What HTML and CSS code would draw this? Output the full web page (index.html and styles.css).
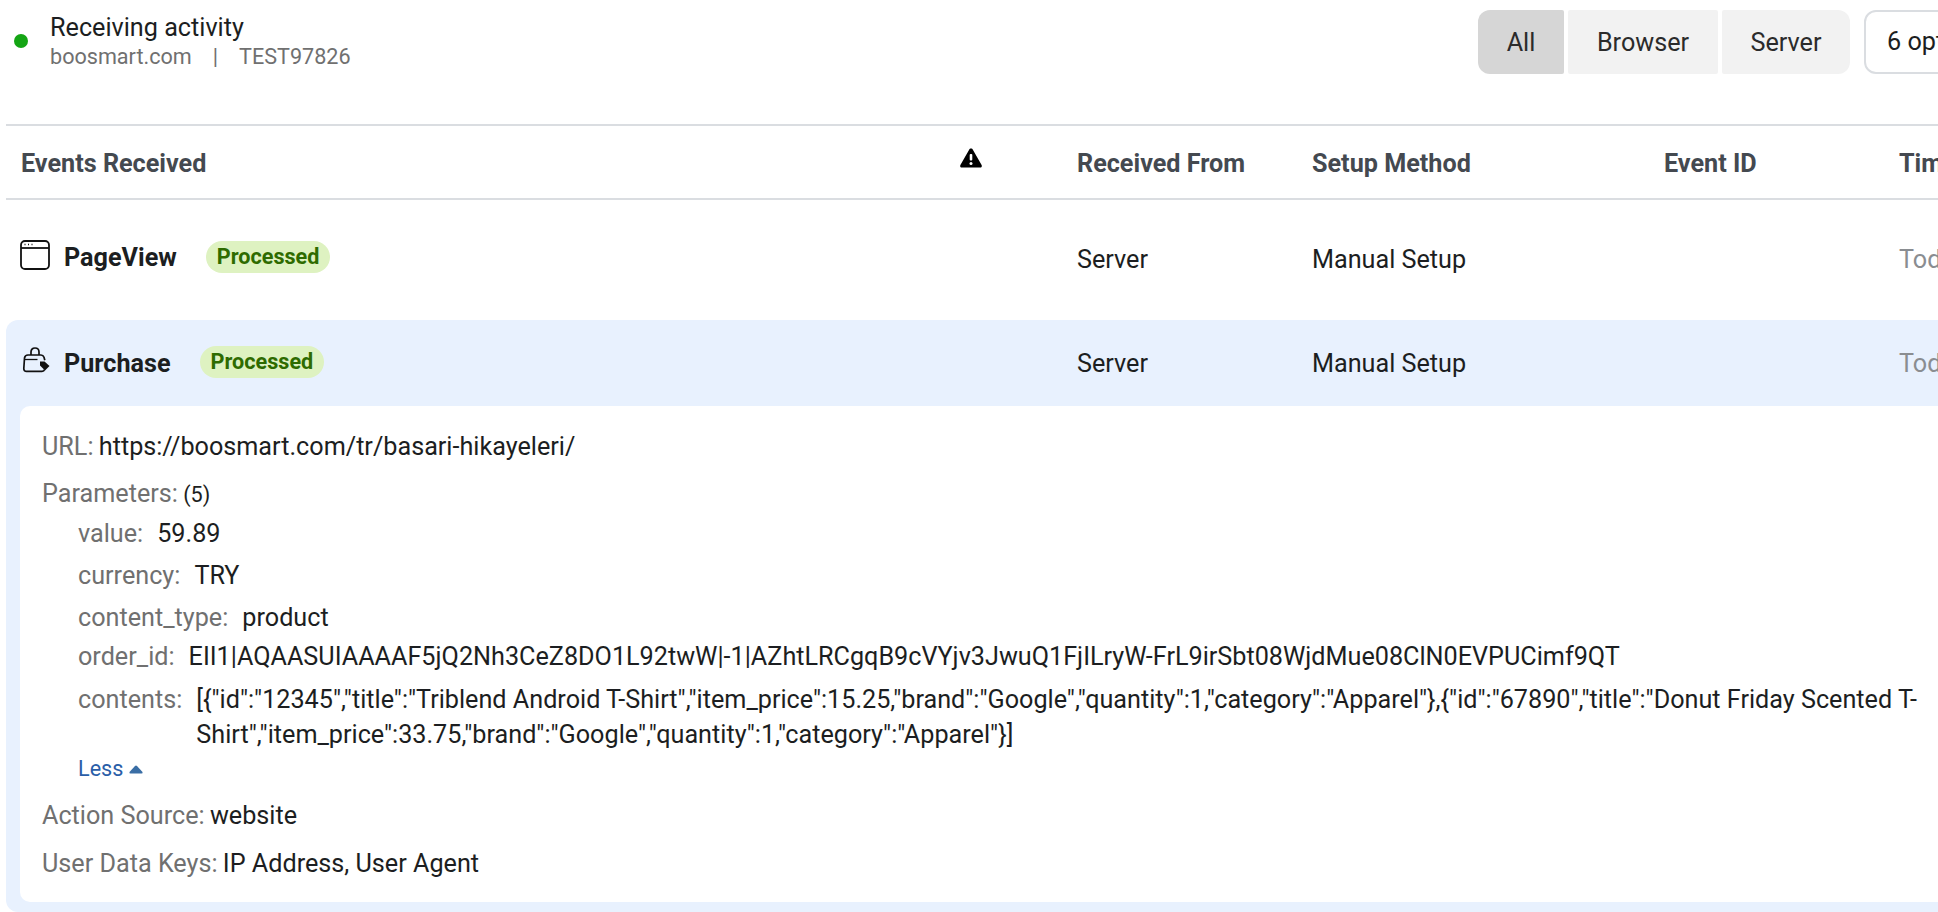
FILE: index.html
```html
<!DOCTYPE html>
<html>
<head>
	<meta charset="utf-8">
	<title>Test Events</title>
	<link rel="stylesheet" href="styles.css">
</head>
<body>
	<div class="page">
		<div class="topbar">
			<div class="status">
				<span class="dot"></span>
				<div>
					<div class="status-title">Receiving activity</div>
					<div class="status-sub"><span>boosmart.com</span><span class="sep">|</span><span>TEST97826</span></div>
				</div>
			</div>
			<div class="filters">
				<div class="seg seg-first seg-on">All</div>
				<div class="seg seg-browser">Browser</div>
				<div class="seg seg-last">Server</div>
				<div class="select">6 options selected</div>
			</div>
		</div>

		<div class="cols head">
			<div class="c-name">Events Received</div>
			<div class="c-warn">
				<svg width="24" height="20" viewBox="0 0 24 20"><path d="M12 0.500c.9 0 1.500.5 2 1.400l8.600 15c.7 1.300 0 2.600-1.500 2.600H2.900c-1.500 0-2.200-1.300-1.500-2.600l8.600-15c.5-.9 1.100-1.400 2-1.400z" fill="#000"/><rect x="10.700" y="6" width="2.600" height="6.600" rx="1" fill="#fff"/><circle cx="12" cy="15.400" r="1.500" fill="#fff"/></svg>
			</div>
			<div class="c-from">Received From</div>
			<div class="c-method">Setup Method</div>
			<div class="c-id">Event ID</div>
			<div class="c-time">Time Received</div>
		</div>

		<div class="cols row">
			<div class="c-name">
				<svg class="ev-icon" width="30" height="30" viewBox="0 0 30 30" fill="none" stroke="#111" stroke-width="1.800"><rect x="1" y="1" width="28" height="28" rx="4"/><path d="M1 8h28"/><path d="M4.500 4.500h1M8 4.500h1M11.500 4.500h1" stroke-width="1.300"/></svg>
				<span class="ev-name">PageView</span>
				<span class="badge">Processed</span>
			</div>
			<div class="c-warn"></div>
			<div class="c-from">Server</div>
			<div class="c-method">Manual Setup</div>
			<div class="c-id"></div>
			<div class="c-time muted">Today at 10:42 AM</div>
		</div>

		<div class="open">
			<div class="cols row-open">
				<div class="c-name">
					<svg class="ev-icon bag" width="28" height="26" viewBox="0 0 28 26" fill="none" stroke="#111" stroke-width="1.700"><path d="M9 8V5C9 2.600 10.700 1 13 1S17 2.600 17 5V8"/><path d="M6 8h13c1.500 0 2.500.8 3 2.200l.8 3M6 8C4 8 2.800 9.300 2.500 11L1.800 21.500c-.1 1.700 1 2.800 2.700 2.800h15.500c1.300 0 2.200-.6 2.600-1.800"/><path d="M2.500 12.500h13" stroke-width="1.300"/><path d="M18 14.500h4.500l5 4.500-4.500 4.500-5-5z" fill="#111" stroke="none"/></svg>
					<span class="ev-name">Purchase</span>
					<span class="badge">Processed</span>
				</div>
				<div class="c-warn"></div>
				<div class="c-from">Server</div>
				<div class="c-method">Manual Setup</div>
				<div class="c-id"></div>
				<div class="c-time muted">Today at 10:42 AM</div>
			</div>
			<div class="detail">
				<div class="line line-url"><span class="key">URL:</span> https://boosmart.com/tr/basari-hikayeleri/</div>
				<div class="line line-params"><span class="key">Parameters:</span> <span class="count">(5)</span></div>
				<div class="param param-first"><span class="key">value:</span><span>59.89</span></div>
				<div class="param"><span class="key">currency:</span><span>TRY</span></div>
				<div class="param"><span class="key">content_type:</span><span>product</span></div>
				<div class="param param-order"><span class="key">order_id:</span><span>EII1|AQAASUIAAAAF5jQ2Nh3CeZ8DO1L92twW|-1|AZhtLRCgqB9cVYjv3JwuQ1FjILryW-FrL9irSbt08WjdMue08ClN0EVPUCimf9QT</span></div>
				<div class="param param-long"><span class="key">contents:</span><span class="long">[{"id":"12345","title":"Triblend Android T-Shirt","item_price":15.25,"brand":"Google","quantity":1,"category":"Apparel"},{"id":"67890","title":"Donut Friday Scented T-Shirt","item_price":33.75,"brand":"Google","quantity":1,"category":"Apparel"}]</span></div>
				<div class="less">Less <svg class="caret" width="14" height="9" viewBox="0 0 14 9"><path d="M6 1q1-1 2 0l5.500 6q.5 1.500-1 1.500h-11q-1.500 0-1-1.500z" fill="#3a6ea5"/></svg></div>
				<div class="line line-source"><span class="key">Action Source:</span> website</div>
				<div class="line line-keys"><span class="key">User Data Keys:</span> IP Address, User Agent</div>
			</div>
		</div>
	</div>
</body>
</html>
```
FILE: styles.css
```css
html, body {
	margin: 0;
	height: 912px;
	overflow: hidden;
	background: #fff;
}
body {
	font-family: Roboto, "Liberation Sans", sans-serif;
	font-size: 25.2px;
	color: #1c1e21;
}
.page {
	width: 2200px;
	margin-left: 6px;
}
.topbar {
	width: 1932px;
	height: 124px;
	border-bottom: 2px solid #dadde1;
	display: flex;
	justify-content: space-between;
	overflow: hidden;
}
.status {
	display: flex;
	align-items: flex-start;
}
.dot {
	width: 14px;
	height: 14px;
	border-radius: 50%;
	background: #14a514;
	margin: 34px 22px 0 8px;
}
.status-title {
	margin-top: 13px;
	line-height: 30px;
}
.status-sub {
	line-height: 27px;
	font-size: 21.6px;
	color: #707070;
}
.sep {
	margin: 0 21px;
}
.filters {
	display: flex;
	gap: 4px;
	margin-top: 10px;
	height: 64px;
	flex: none;
	width: 460px;
}
.seg {
	background: #f2f2f2;
	display: flex;
	align-items: center;
	justify-content: center;
	flex: none;
	border-radius: 2px;
	color: #2b2b2b;
}
.seg-first {
	width: 86px;
	border-radius: 12px 2px 2px 12px;
}
.seg-on {
	background: #d6d6d6;
}
.seg-browser {
	width: 150px;
}
.seg-last {
	width: 128px;
	border-radius: 2px 12px 12px 2px;
}
.select {
	width: 300px;
	flex: none;
	margin-left: 10px;
	border: 2px solid #dadde1;
	border-radius: 12px;
	padding-left: 21px;
	line-height: 60px;
	white-space: nowrap;
}
.cols {
	display: grid;
	grid-template-columns: 954px 117px 235px 352px 235px 300px;
	align-items: center;
	white-space: nowrap;
}
.cols > div:first-child {
	padding-left: 15px;
}
.head {
	height: 70px;
	padding-top: 2px;
	font-weight: 700;
	color: #444950;
	border-bottom: 2px solid #dadde1;
	width: 1932px;
	overflow: hidden;
}
.c-warn svg {
	display: block;
	margin: -10px 0 0 -1px;
}
.row {
	height: 120px;
	padding-bottom: 2px;
	box-sizing: border-box;
}
.row .c-name {
	margin-top: -3px;
}
.c-name {
	display: flex;
	align-items: center;
}
.ev-name {
	font-weight: 700;
	margin-left: 14px;
}
.ev-icon {
	flex: none;
	margin: -6px 0 0 -1px;
}
.bag {
	margin-left: 1px;
}
.badge {
	background: #def2c1;
	color: #2e6b00;
	font-size: 21.6px;
	font-weight: 700;
	line-height: 32px;
	padding: 0 11px;
	border-radius: 16px;
	margin: -2px 0 0 29px;
}
.muted {
	color: #8a8d91;
}
.open {
	background: #e8f1fe;
	border-radius: 12px 0 0 12px;
	height: 592px;
}
.row-open {
	height: 86px;
}
.detail {
	background: #fff;
	margin-left: 14px;
	height: 496px;
	border-radius: 10px 0 0 10px;
	padding-left: 22px;
	line-height: 30px;
}
.key {
	color: #707070;
}
.line .key {
	margin-right: -1px;
}
.line-url {
	padding-top: 26px;
}
.line-params {
	margin-top: 17px;
}
.count {
	font-size: 21.6px;
}
.param {
	display: flex;
	gap: 14px;
	margin-left: 36px;
	margin-top: 12px;
}
.param-first {
	margin-top: 9px;
}
.param-order {
	margin-top: 9px;
}
.param-long {
	margin-top: 10px;
}
.long {
	width: 1722px;
	line-height: 35px;
}
.param-long .key {
	line-height: 35px;
}
.less {
	color: #2a5ea8;
	font-size: 21.6px;
	margin: 2px 0 0 36px;
}
.caret {
	vertical-align: 2px;
}
.line-source {
	margin-top: 17px;
}
.line-keys {
	margin-top: 18px;
}
```
